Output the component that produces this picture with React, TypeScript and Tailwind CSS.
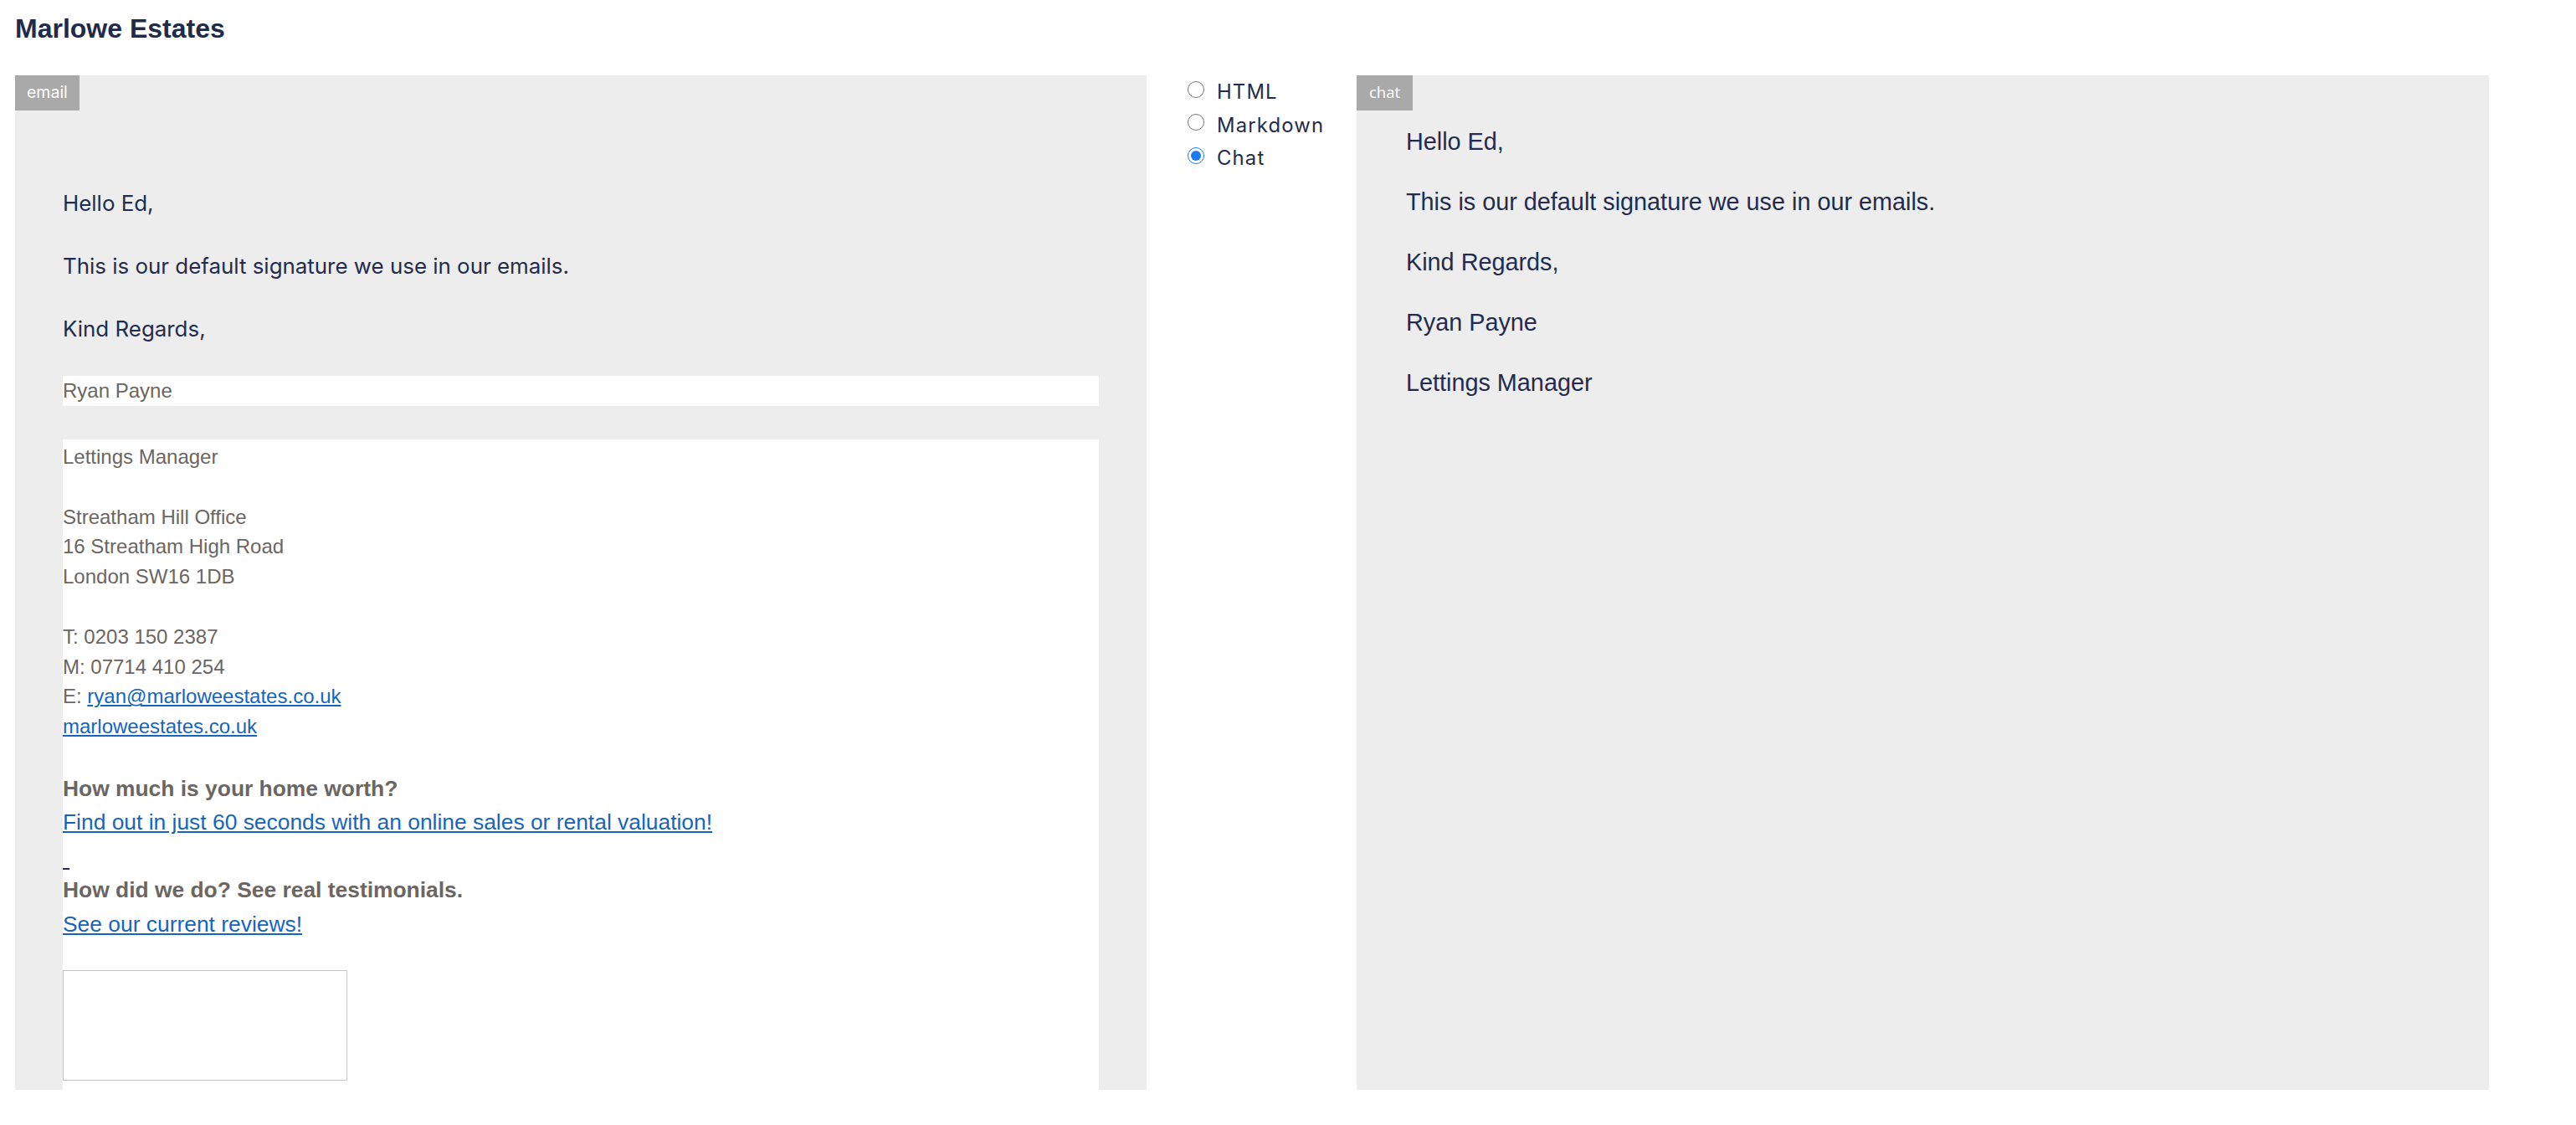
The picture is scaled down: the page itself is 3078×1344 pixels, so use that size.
import React from 'react'

const sans = "font-['Inter','Lato',sans-serif]"
const arial = "font-['Liberation_Sans','Arial',sans-serif]"

const EmailPreview = () => {
    return (
        <div className="w-[1352px] h-full shrink-0 bg-[#ededed] overflow-hidden">
            <div className={`inline-block h-[42px] px-[14px] bg-[#a9a9a9] text-white text-[19.5px] leading-[40px] ${sans}`}>email</div>

            <div className="pl-[57px] pt-[92px]">
                {/* greeting */}
                <div className={`text-[25.9px] leading-[37.5px] text-[#232c4e] ${sans}`}>
                    <p className="mb-[37.5px]">Hello Ed,</p>
                    <p className="mb-[37.5px]">This is our default signature we use in our emails.</p>
                    <p className="mb-[37.5px]">Kind Regards,</p>
                </div>

                {/* signature */}
                <div className={`w-[1238px] ${arial} text-[#6b6663]`}>
                    <div className="mt-[3px] h-[36px] bg-white text-[24px] leading-[36px]">Ryan Payne</div>

                    <div className="mt-[40px] bg-white pt-[3px] pb-[40px]">
                        <div className="text-[24px] leading-[35.8px]">
                            <p>Lettings Manager</p>
                            <p>&nbsp;</p>
                            <p>Streatham Hill Office</p>
                            <p>16 Streatham High Road</p>
                            <p>London SW16 1DB</p>
                            <p>&nbsp;</p>
                            <p>T: 0203 150 2387</p>
                            <p>M: 07714 410 254</p>
                            <p>
                                E: <a href="#" className="text-[#1565c0] underline">ryan@marloweestates.co.uk</a>
                            </p>
                            <p>
                                <a href="#" className="text-[#1565c0] underline">marloweestates.co.uk</a>
                            </p>
                            <p>&nbsp;</p>
                        </div>

                        <div className="text-[26.4px] leading-[40.5px]">
                            <p className="font-bold">How much is your home worth?</p>
                            <p>
                                <a href="#" className="text-[#1565c0] underline">Find out in just 60 seconds with an online sales or rental valuation!</a>
                            </p>
                            <div className="h-[40.5px] pt-[34px]">
                                <div className="w-[8px] h-[2px] bg-[#232c4e]" />
                            </div>
                            <p className="font-bold">How did we do? See real testimonials.</p>
                            <p>
                                <a href="#" className="text-[#1565c0] underline">See our current reviews!</a>
                            </p>
                        </div>

                        <div className="mt-[35px] w-[340px] h-[132px] border border-[#c4c4c4] bg-white" />
                    </div>
                </div>
            </div>
        </div>
    )
}

const FormatPicker = () => {
    const options = ['HTML', 'Markdown', 'Chat']
    return (
        <div className="w-[251px] shrink-0 pl-[49px] -mt-[3px]">
            {options.map((opt) => (
                <label key={opt} className="flex items-center gap-[15px] h-[39.5px]">
                    <input
                        type="radio"
                        name="format"
                        defaultChecked={opt === 'Chat'}
                        className="w-[20px] h-[20px] m-0 accent-[#1a7cf5]"
                    />
                    <span className={`mt-[7px] text-[23.8px] leading-[28px] tracking-[0.05em] text-[#232c4e] ${sans}`}>{opt}</span>
                </label>
            ))}
        </div>
    )
}

const ChatPreview = () => {
    return (
        <div className="w-[1353px] h-full shrink-0 bg-[#ededed] overflow-hidden">
            <div className="inline-block h-[42px] px-[15px] bg-[#a9a9a9] text-white text-[18.5px] leading-[40px] font-['Open_Sans',sans-serif]">chat</div>
            <div className={`pl-[59px] pt-[19px] text-[28.8px] leading-[36px] text-[#232c4e] ${arial}`}>
                <p className="mb-[36px]">Hello Ed,</p>
                <p className="mb-[36px]">This is our default signature we use in our emails.</p>
                <p className="mb-[36px]">Kind Regards,</p>
                <p className="mb-[36px]">Ryan Payne</p>
                <p className="mb-[36px]">Lettings Manager</p>
            </div>
        </div>
    )
}

export default function App() {
    return (
        <div className="min-h-screen bg-white px-[18px] pt-[15px]">
            <h1 className={`text-[32px] leading-[38px] font-bold text-[#222a4a] mb-[37px] ${arial}`}>Marlowe Estates</h1>
            <div className="flex items-start h-[1212px]">
                <EmailPreview />
                <FormatPicker />
                <ChatPreview />
            </div>
        </div>
    )
}
